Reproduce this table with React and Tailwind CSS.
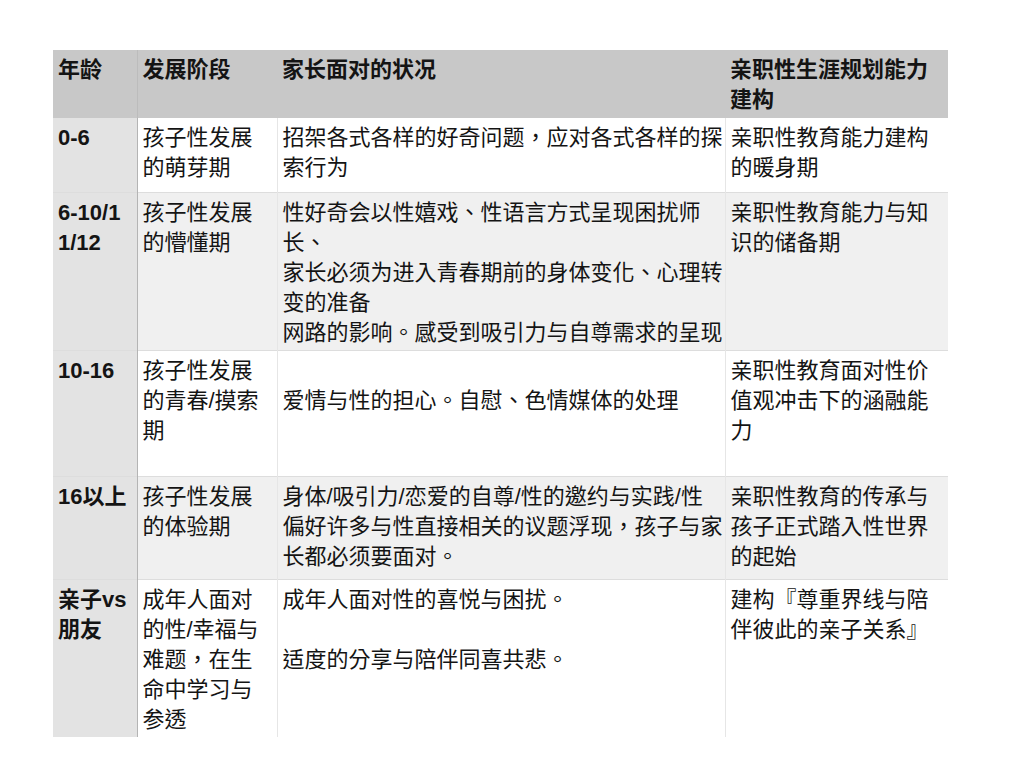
import React from 'react';

const rows = [
    {
        age: ['0-6'],
        stage: ['孩子性发展', '的萌芽期'],
        parent: ['招架各式各样的好奇问题，应对各式各样的探', '索行为'],
        build: ['亲职性教育能力建构', '的暖身期'],
        height: 'h-[74px]',
        bg: 'bg-white',
    },
    {
        age: ['6-10/1', '1/12'],
        stage: ['孩子性发展', '的懵懂期'],
        parent: [
            '性好奇会以性嬉戏、性语言方式呈现困扰师',
            '长、',
            '家长必须为进入青春期前的身体变化、心理转',
            '变的准备',
            '网路的影响。感受到吸引力与自尊需求的呈现',
        ],
        build: ['亲职性教育能力与知', '识的储备期'],
        height: 'h-[158px]',
        bg: 'bg-[#f0f0f0]',
    },
    {
        age: ['10-16'],
        stage: ['孩子性发展', '的青春/摸索', '期'],
        parent: ['', '爱情与性的担心。自慰、色情媒体的处理'],
        build: ['亲职性教育面对性价', '值观冲击下的涵融能', '力'],
        height: 'h-[126px]',
        bg: 'bg-white',
    },
    {
        age: ['16以上'],
        stage: ['孩子性发展', '的体验期'],
        parent: [
            '身体/吸引力/恋爱的自尊/性的邀约与实践/性',
            '偏好许多与性直接相关的议题浮现，孩子与家',
            '长都必须要面对。',
        ],
        build: ['亲职性教育的传承与', '孩子正式踏入性世界', '的起始'],
        height: 'h-[103px]',
        bg: 'bg-[#f0f0f0]',
    },
    {
        age: ['亲子vs', '朋友'],
        stage: ['成年人面对', '的性/幸福与', '难题，在生', '命中学习与', '参透'],
        parent: ['成年人面对性的喜悦与困扰。', '', '适度的分享与陪伴同喜共悲。'],
        build: ['建构『尊重界线与陪', '伴彼此的亲子关系』'],
        height: 'h-[158px]',
        bg: 'bg-white',
    },
];

// each cell keeps the line breaks of the original sheet
function Lines({ lines }) {
    return lines.map((line, i) => (
        <div key={i} className="whitespace-nowrap h-[30px]">
            {line}
        </div>
    ));
}

export default function App() {
    const cell = 'align-top px-[5px] pt-[5px] pb-0 text-left';

    return (
        <div
            className="min-h-screen bg-white pt-[50px] pl-[53px] text-[#141414] text-[22px] leading-[30px]"
            style={{ fontFamily: '"Liberation Sans", "Noto Sans CJK TC", "Noto Sans CJK SC", sans-serif' }}
        >
            <table className="table-fixed w-[895px] border-collapse">
                <colgroup>
                    <col className="w-[84px]" />
                    <col className="w-[140px]" />
                    <col className="w-[448px]" />
                    <col className="w-[223px]" />
                </colgroup>
                <thead>
                    <tr className="h-[68px] bg-[#c8c8c8]">
                        <th className={`${cell} font-bold border-r border-[#bcbcbc]`}>
                            <Lines lines={['年龄']} />
                        </th>
                        <th className={`${cell} font-bold`}>
                            <Lines lines={['发展阶段']} />
                        </th>
                        <th className={`${cell} font-bold`}>
                            <Lines lines={['家长面对的状况']} />
                        </th>
                        <th className={`${cell} font-bold`}>
                            <Lines lines={['亲职性生涯规划能力', '建构']} />
                        </th>
                    </tr>
                </thead>
                <tbody>
                    {rows.map((row, idx) => (
                        <tr
                            key={idx}
                            className={`${row.height} ${row.bg} ${idx < rows.length - 1 ? 'border-b border-[#dddddd]' : ''}`}
                        >
                            <td className={`${cell} font-bold bg-[#e3e3e3] border-r border-[#b4b4b4]`}>
                                <Lines lines={row.age} />
                            </td>
                            <td className={`${cell} border-r border-[#e6e6e6]`}>
                                <Lines lines={row.stage} />
                            </td>
                            <td className={`${cell} border-r border-[#e6e6e6]`}>
                                <Lines lines={row.parent} />
                            </td>
                            <td className={cell}>
                                <Lines lines={row.build} />
                            </td>
                        </tr>
                    ))}
                </tbody>
            </table>
        </div>
    );
}
